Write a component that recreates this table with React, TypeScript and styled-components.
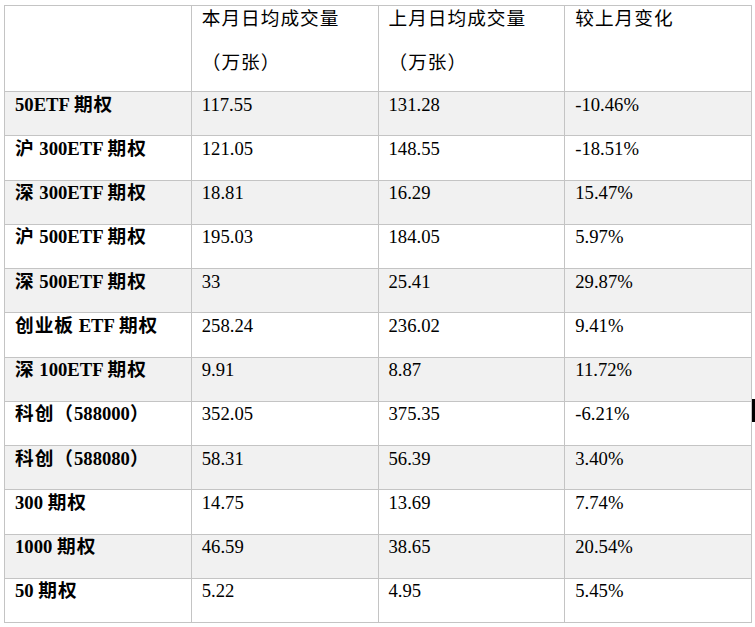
import React from "react";
import styled, { createGlobalStyle } from "styled-components";

const GlobalStyle = createGlobalStyle`
  html, body {
    margin: 0;
    padding: 0;
    background: #ffffff;
  }
  body {
    font-family: "Liberation Serif", "Noto Sans CJK SC", serif;
    color: #000000;
  }
`;

const Page = styled.div`
  position: relative;
  width: 755px;
  height: 627px;
  padding: 5px 0 0 4px;
  box-sizing: border-box;
  overflow: hidden;
`;

const Grid = styled.div`
  display: grid;
  width: 748px;
  grid-template-columns: repeat(4, 1fr);
  grid-template-rows: 86px repeat(12, 44.25px);
  border-top: 1px solid #c4c4c4;
  border-left: 1px solid #c4c4c4;
  box-sizing: border-box;
`;

const Cell = styled.div<{ $shade?: boolean; $bold?: boolean }>`
  background: ${(p) => (p.$shade ? "#f1f1f1" : "#ffffff")};
  border-right: 1px solid #c4c4c4;
  border-bottom: 1px solid #c4c4c4;
  padding: 1.5px 8px 0 10px;
  font-size: 18.67px;
  font-weight: ${(p) => (p.$bold ? 700 : 400)};
  overflow: hidden;
  white-space: nowrap;
`;

const Para = styled.p`
  margin: 0 0 22px 0;
  line-height: 22px;
`;

const Cjk = styled.span`
  letter-spacing: 1px;
`;

const Caret = styled.div`
  position: absolute;
  left: 752px;
  top: 399px;
  width: 3px;
  height: 23px;
  background: #000000;
`;

const cjkRe = /([\u3000-\u9fff\uff00-\uffef]+)/;

const Txt: React.FC<{ text: string }> = ({ text }) => (
  <>
    {text.split(cjkRe).map((part, i) =>
      cjkRe.test(part) ? <Cjk key={i}>{part}</Cjk> : <React.Fragment key={i}>{part}</React.Fragment>
    )}
  </>
);

const header: string[][] = [
  [],
  ["本月日均成交量", "（万张）"],
  ["上月日均成交量", "（万张）"],
  ["较上月变化"],
];

const rows: [string, string, string, string][] = [
  ["50ETF 期权", "117.55", "131.28", "-10.46%"],
  ["沪 300ETF 期权", "121.05", "148.55", "-18.51%"],
  ["深 300ETF 期权", "18.81", "16.29", "15.47%"],
  ["沪 500ETF 期权", "195.03", "184.05", "5.97%"],
  ["深 500ETF 期权", "33", "25.41", "29.87%"],
  ["创业板 ETF 期权", "258.24", "236.02", "9.41%"],
  ["深 100ETF 期权", "9.91", "8.87", "11.72%"],
  ["科创（588000）", "352.05", "375.35", "-6.21%"],
  ["科创（588080）", "58.31", "56.39", "3.40%"],
  ["300 期权", "14.75", "13.69", "7.74%"],
  ["1000 期权", "46.59", "38.65", "20.54%"],
  ["50 期权", "5.22", "4.95", "5.45%"],
];

export default function App() {
  return (
    <>
      <GlobalStyle />
      <Page>
        <Grid>
          {header.map((lines, i) => (
            <Cell key={`h${i}`}>
              {lines.map((l, j) => (
                <Para key={j}>
                  <Txt text={l} />
                </Para>
              ))}
            </Cell>
          ))}
          {rows.map((r, ri) =>
            r.map((v, ci) => (
              <Cell key={`${ri}-${ci}`} $shade={ri % 2 === 0} $bold={ci === 0}>
                <Para>
                  <Txt text={v} />
                </Para>
              </Cell>
            ))
          )}
        </Grid>
        <Caret />
      </Page>
    </>
  );
}
